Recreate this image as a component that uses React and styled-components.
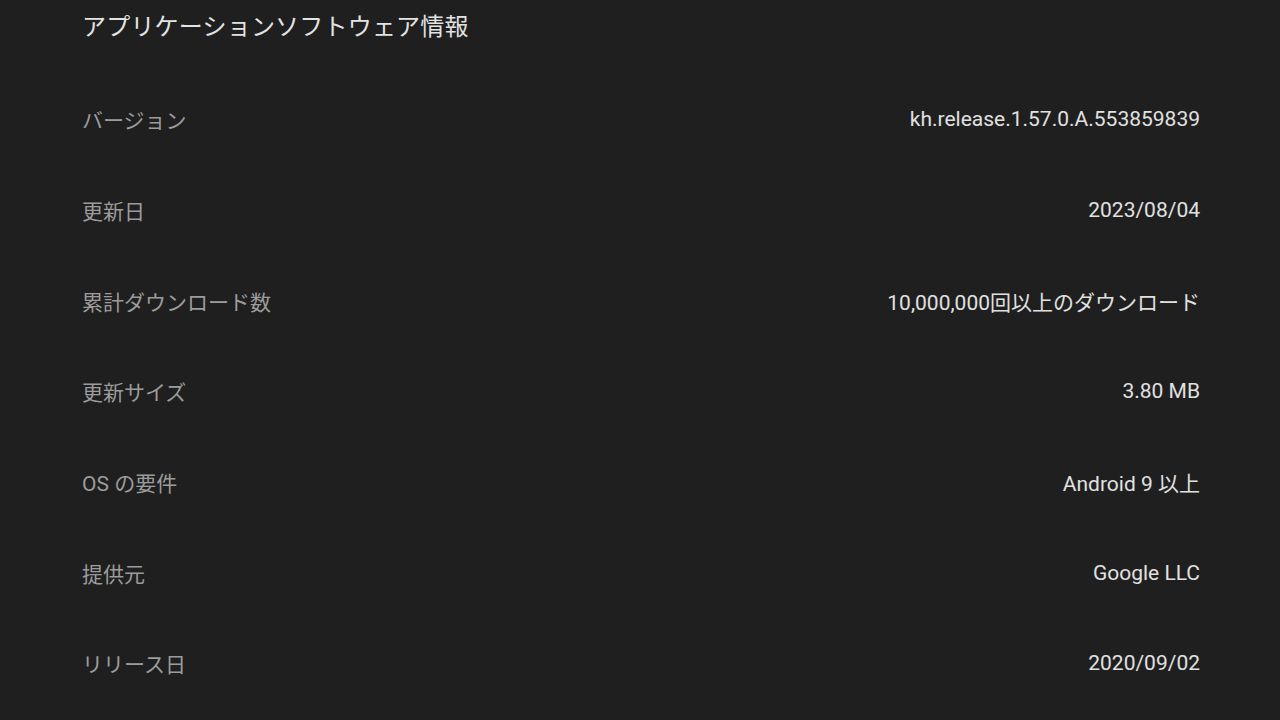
import React from 'react'
import styled, { createGlobalStyle } from 'styled-components'

const GlobalStyle = createGlobalStyle`
  html, body {
    margin: 0;
    padding: 0;
    background: #1f1f1f;
  }
  body {
    font-family: Roboto, "Noto Sans CJK JP", sans-serif;
  }
`

const Page = styled.div`
  width: 1280px;
  height: 720px;
  overflow: hidden;
  box-sizing: border-box;
  padding: 0 80px 0 82px;
  background: #1f1f1f;
`

const Title = styled.h2`
  margin: 0;
  height: 54px;
  line-height: 54px;
  font-size: 24px;
  font-weight: 400;
  color: #e3e3e3;
  letter-spacing: 0.2px;
`

const List = styled.dl`
  margin: 20px 0 0;
  display: flex;
  flex-direction: column;
`

const Row = styled.div`
  display: flex;
  align-items: center;
  justify-content: space-between;
  height: 90.67px;
`

const Label = styled.dt`
  font-size: 21px;
  color: #9c9c9c;
`

const Value = styled.dd`
  margin: 0;
  font-size: 21px;
  color: #e1e1e1;
  text-align: right;
`

const rows = [
  ['バージョン', 'kh.release.1.57.0.A.553859839'],
  ['更新日', '2023/08/04'],
  ['累計ダウンロード数', '10,000,000回以上のダウンロード'],
  ['更新サイズ', '3.80 MB'],
  ['OS の要件', 'Android 9 以上'],
  ['提供元', 'Google LLC'],
  ['リリース日', '2020/09/02'],
]

export default function App() {
  return (
    <Page>
      <GlobalStyle />
      <Title>アプリケーションソフトウェア情報</Title>
      <List>
        {rows.map(([label, value]) => (
          <Row key={label}>
            <Label>{label}</Label>
            <Value>{value}</Value>
          </Row>
        ))}
      </List>
    </Page>
  )
}
